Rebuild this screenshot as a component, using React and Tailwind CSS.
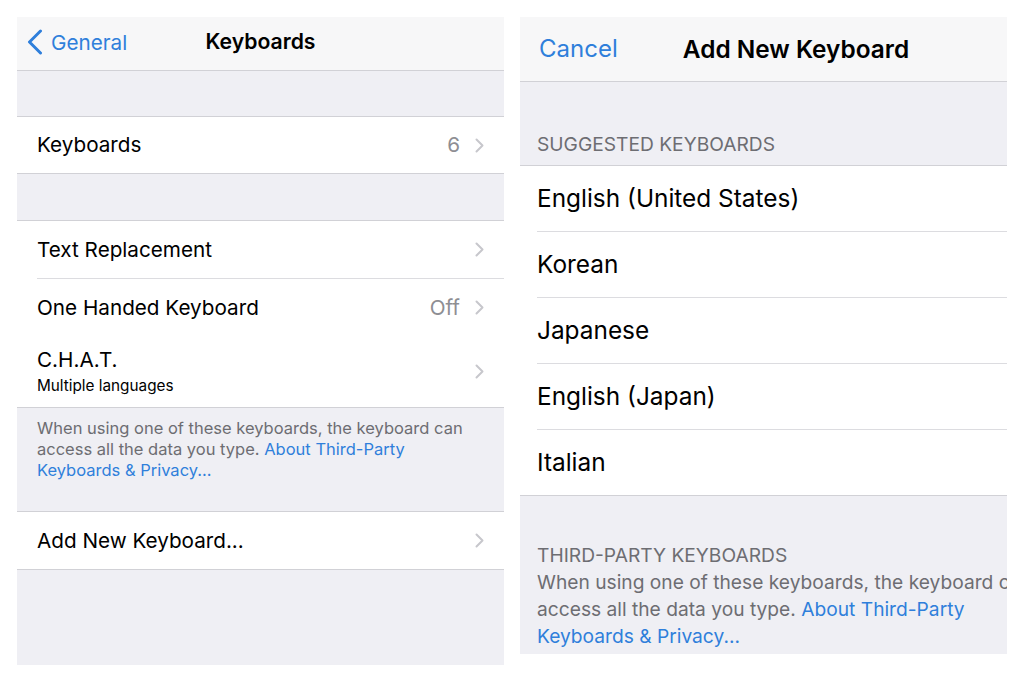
import React from 'react'

const font = "font-['Inter','Noto_Sans',sans-serif]"

function Chevron({ className = '' }) {
    return (
        <svg width="9" height="15" viewBox="0 0 9 15" className={className} fill="none">
            <path d="M1.5 1.5L7.5 7.5L1.5 13.5" stroke="#c7c7cc" strokeWidth="2" strokeLinecap="round" strokeLinejoin="round" />
        </svg>
    )
}

function BackChevron() {
    return (
        <svg width="16" height="26" viewBox="0 0 16 26" fill="none">
            <path d="M13.5 2L2.5 13L13.5 24" stroke="#2f7fdb" strokeWidth="3" strokeLinecap="round" strokeLinejoin="round" />
        </svg>
    )
}

function Row({ label, value, height = 'h-[56px]' }) {
    return (
        <div className={`flex items-center ${height} pl-[20px] pr-[20px] bg-white`}>
            <span className="flex-1 text-[20.7px] text-black">{label}</span>
            {value && <span className="text-[20.7px] text-[#8e8e93] mr-[15px]">{value}</span>}
            <Chevron />
        </div>
    )
}

function KeyboardsSettings() {
    return (
        <div className={`w-[487px] h-[648px] flex flex-col bg-[#efeff4] ${font}`}>
            {/* Nav bar */}
            <div className="relative flex items-center h-[54px] bg-[#f7f7f8] border-b border-[#d1d1d6] px-[10px] pb-[2px]">
                <div className="flex items-center gap-[8px] text-[#2f7fdb] text-[20.7px]">
                    <BackChevron />
                    <span>General</span>
                </div>
                <div className="absolute inset-0 flex items-center justify-center pb-[3px] pointer-events-none">
                    <span className="text-[21.2px] font-semibold text-black">Keyboards</span>
                </div>
            </div>

            <div className="h-[45px]" />

            <div className="border-y border-[#d1d1d6]">
                <Row label="Keyboards" value="6" />
            </div>

            <div className="h-[46px]" />

            <div className="border-y border-[#d1d1d6] bg-white">
                <Row label="Text Replacement" height="h-[57px]" />
                <div className="ml-[20px] border-t border-[#dcdce0]" />
                <Row label="One Handed Keyboard" value="Off" height="h-[57px]" />
                <div className="flex items-center h-[71px] pl-[20px] pr-[20px]">
                    <div className="flex-1 flex flex-col">
                        <span className="text-[20.7px] leading-[24px] text-black">C.H.A.T.</span>
                        <span className="text-[15.3px] leading-[18px] mt-[5px] text-black">Multiple languages</span>
                    </div>
                    <Chevron />
                </div>
            </div>

            <div className="h-[103px] pt-[10px] px-[20px] text-[16.5px] leading-[21px] text-[#6d6d72] whitespace-nowrap">
                When using one of these keyboards, the keyboard can<br />
                access all the data you type. <span className="text-[#2f7fdb]">About Third-Party</span><br />
                <span className="text-[#2f7fdb]">Keyboards &amp; Privacy...</span>
            </div>

            <div className="border-y border-[#d1d1d6]">
                <Row label="Add New Keyboard..." height="h-[57px]" />
            </div>

            <div className="flex-1" />
        </div>
    )
}

const suggested = ['English (United States)', 'Korean', 'Japanese', 'English (Japan)', 'Italian']

function AddKeyboard() {
    return (
        <div className={`w-[487px] h-[637px] overflow-hidden bg-[#efeff4] ${font}`}>
            <div className="w-[552px] flex flex-col">
                {/* Nav bar */}
                <div className="relative flex items-center h-[65px] bg-[#f7f7f8] border-b border-[#d1d1d6] px-[19px]">
                    <span className="text-[24px] text-[#2f7fdb]">Cancel</span>
                    <div className="absolute inset-0 flex items-center justify-center pointer-events-none">
                        <span className="text-[24.4px] font-semibold text-black">Add New Keyboard</span>
                    </div>
                </div>

                <div className="h-[83px] flex items-end pb-[10px] px-[17px] text-[19.2px] leading-[22px] text-[#6d6d72] uppercase">
                    Suggested Keyboards
                </div>

                <div className="border-y border-[#d1d1d6] bg-white">
                    {suggested.map((name, i) => (
                        <div key={name}>
                            {i > 0 && <div className="ml-[17px] border-t border-[#dcdce0]" />}
                            <div className="h-[65px] flex items-center px-[17px] text-[24.4px] text-black">{name}</div>
                        </div>
                    ))}
                </div>

                <div className="h-[159px] pt-[46px] px-[17px] text-[19.2px] leading-[27px] text-[#6d6d72] border-b border-[#d1d1d6] whitespace-nowrap">
                    <div className="uppercase">Third-Party Keyboards</div>
                    When using one of these keyboards, the keyboard can<br />
                    access all the data you type. <span className="text-[#2f7fdb]">About Third-Party</span><br />
                    <span className="text-[#2f7fdb]">Keyboards &amp; Privacy...</span>
                </div>
            </div>
        </div>
    )
}

export default function App() {
    return (
        <div className="w-[1024px] h-[682px] bg-white flex items-start gap-[16px] pt-[17px] pl-[17px] overflow-hidden">
            <KeyboardsSettings />
            <AddKeyboard />
        </div>
    )
}
